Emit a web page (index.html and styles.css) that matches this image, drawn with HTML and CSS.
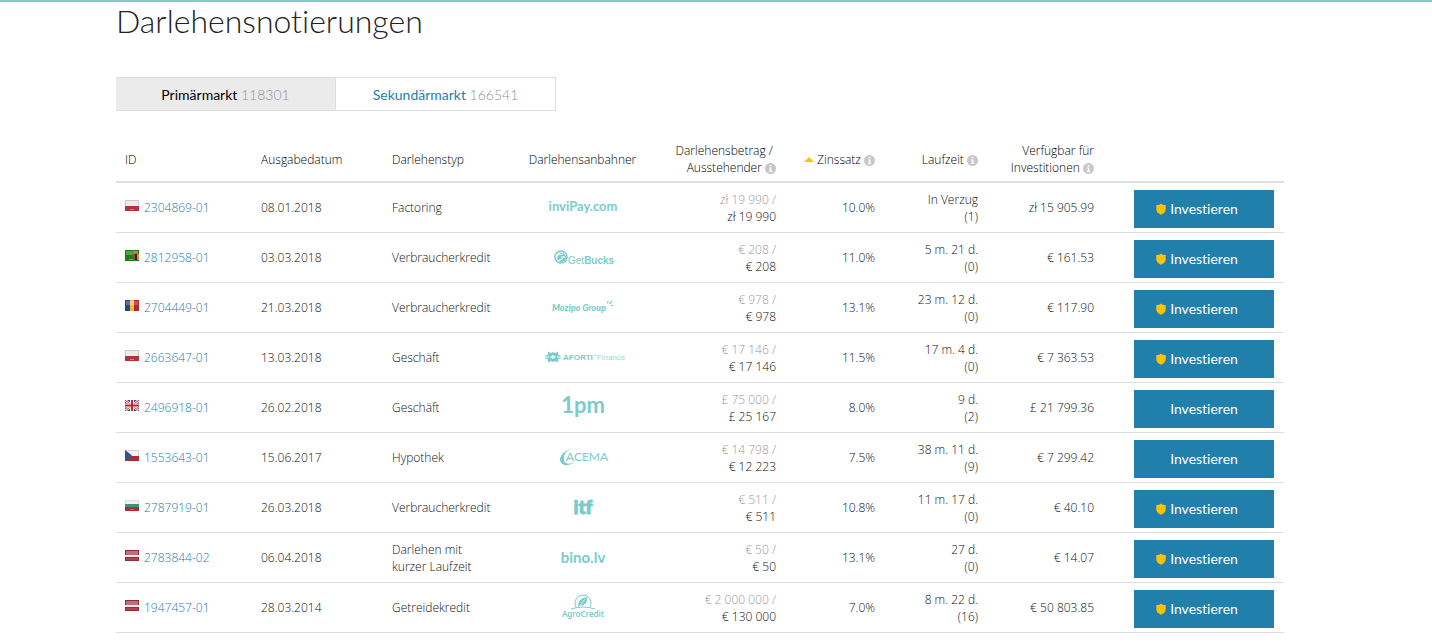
FILE: index.html
```html
<!DOCTYPE html>
<html lang="de">
<head>
  <meta charset="UTF-8" />
  <meta name="viewport" content="width=device-width, initial-scale=1.0" />
  <title>Darlehensnotierungen</title>
  <link rel="stylesheet" href="styles.css">
</head>
<body>
  <svg class="defs" aria-hidden="true">
    <symbol id="info" viewBox="0 0 11 11">
      <circle cx="5.5" cy="5.5" r="5.5" fill="#c9c7c7" />
      <path d="M4 4.5h2.400v3.600h.8v1H3.900v-1h.9V5.500H4zM4.700 2h1.700v1.600H4.700z" fill="#fff" />
    </symbol>
    <symbol id="shield" viewBox="0 0 10 12">
      <path d="M5 0.500C6 1.500 7.500 2 9.700 2v4c0 2.800-2 4.500-4.700 5.700C2.300 10.500.3 8.800.3 6V2C2.500 2 4 1.500 5 .5z" fill="#fdc300" />
    </symbol>
    <symbol id="pl" viewBox="0 0 14 11">
      <path d="M0 0h14v11H0z" fill="#c9c9c9" />
      <path d="M1 1h12v5H1z" fill="#ececec" />
      <path d="M0 6h14v5H0z" fill="#b2343a" />
      <path d="M5 9h4v1H5z" fill="#cf7a7e" />
    </symbol>
    <symbol id="zm" viewBox="0 0 14 11">
      <path d="M0 0h14v11H0z" fill="#1f7a1a" />
      <path d="M1 1h12v4H1z" fill="#54a046" />
      <path d="M8 4h2v6H8z" fill="#c23038" />
      <path d="M10 4h2v6h-2z" fill="#2b2526" />
      <path d="M12 4h2v6h-2z" fill="#e08a1e" />
      <path d="M9 1h4v2H9z" fill="#c58a2a" />
      <path d="M4 9h4v1H4z" fill="#6ab05c" />
    </symbol>
    <symbol id="ro" viewBox="0 0 14 11">
      <path d="M0 0h5v11H0z" fill="#27448f" />
      <path d="M1 1h4v4H1z" fill="#5871ad" />
      <path d="M5 0h4v11H5z" fill="#f3bd32" />
      <path d="M5 1h4v4H5z" fill="#f8d473" />
      <path d="M9 0h5v11H9z" fill="#ad2a31" />
      <path d="M9 1h4v4H9z" fill="#c5575c" />
    </symbol>
    <symbol id="gb" viewBox="0 0 14 11">
      <path d="M0 0h14v11H0z" fill="#2f3f7d" />
      <path d="M0 0l14 11M14 0L0 11" stroke="#f2f2f2" stroke-width="2.600" />
      <path d="M0 0l14 11M14 0L0 11" stroke="#c2343c" stroke-width="1" />
      <path d="M7 0v11M0 5.500h14" stroke="#f5f5f5" stroke-width="4" />
      <path d="M7 0v11M0 5.500h14" stroke="#c2242c" stroke-width="2" />
    </symbol>
    <symbol id="cz" viewBox="0 0 14 11">
      <path d="M0 0h14v11H0z" fill="#d5d5d5" />
      <path d="M1 1h12v5H1z" fill="#f4f4f4" />
      <path d="M0 6h14v5H0z" fill="#b2282f" />
      <path d="M2 8h10v1H2z" fill="#8f3a48" />
      <path d="M0 0l7 5.500L0 11z" fill="#2b5597" />
    </symbol>
    <symbol id="bg" viewBox="0 0 14 11">
      <path d="M0 0h14v4H0z" fill="#dcdcdc" />
      <path d="M1 1h12v3H1z" fill="#f2f2f2" />
      <path d="M0 4h14v3H0z" fill="#3a9479" />
      <path d="M0 7h14v4H0z" fill="#ae2c32" />
      <path d="M5 9h4v1H5z" fill="#c75a60" />
    </symbol>
    <symbol id="lv" viewBox="0 0 14 11">
      <path d="M0 0h14v11H0z" fill="#9a2831" />
      <path d="M1 1h12v4H1z" fill="#b9707a" />
      <path d="M0 5h14v2H0z" fill="#f0e6e7" />
      <path d="M1 8h12v2H1z" fill="#a84750" />
    </symbol>
  </svg>

  <main class="page">
    <h1>Darlehensnotierungen</h1>

    <nav class="tabs">
      <a href="#primary" class="tab active">Primärmarkt <span>118301</span></a>
      <a href="#secondary" class="tab">Sekundärmarkt <span>166541</span></a>
    </nav>

    <table class="loans">
      <colgroup>
        <col class="c-id"><col class="c-date"><col class="c-type"><col class="c-type"><col class="c-id">
        <col class="c-rate"><col class="c-term"><col class="c-avail"><col>
      </colgroup>
      <thead>
        <tr>
          <th>ID</th>
          <th>Ausgabedatum</th>
          <th>Darlehenstyp</th>
          <th class="center">Darlehensanbahner</th>
          <th class="num">Darlehensbetrag /&nbsp;<br>Ausstehender <svg class="info"><use href="#info" /></svg></th>
          <th class="num"><span class="caret"></span> Zinssatz <svg class="info"><use href="#info" /></svg></th>
          <th class="num">Laufzeit <svg class="info"><use href="#info" /></svg></th>
          <th class="num">Verfügbar für<br>Investitionen <svg class="info"><use href="#info" /></svg></th>
          <th></th>
        </tr>
      </thead>
      <tbody>
        <tr>
          <td><a class="loan" href="#2304869-01"><svg class="flag"><use href="#pl" /></svg>2304869-01</a></td>
          <td>08.01.2018</td>
          <td>Factoring</td>
          <td class="center"><svg class="logo" viewBox="0 0 90 36"><text class="round" x="45" y="21" font-size="13" text-anchor="middle">inviPay.com</text></svg></td>
          <td class="num"><span class="total">zł 19 990 /</span><br>zł 19 990</td>
          <td class="num">10.0%</td>
          <td class="num">In Verzug<br>(1)</td>
          <td class="num">zł 15 905.99</td>
          <td class="action"><button class="invest"><svg class="shield"><use href="#shield" /></svg><span>Investieren</span></button></td>
        </tr>
        <tr>
          <td><a class="loan" href="#2812958-01"><svg class="flag"><use href="#zm" /></svg>2812958-01</a></td>
          <td>03.03.2018</td>
          <td>Verbraucherkredit</td>
          <td class="center"><svg class="logo" viewBox="0 0 90 36">
            <circle cx="23" cy="17" r="6" fill="none" stroke="#7accca" stroke-width="1.500" />
            <circle cx="23.500" cy="17.500" r="4.500" />
            <path d="M18.500 17q2-4 6-2.500M20 20.500q5-.5 6-4.500M23 17h4" fill="none" stroke="#fff" />
            <text x="30" y="24" font-size="10">Get<tspan font-weight="700">Bucks</tspan></text>
          </svg></td>
          <td class="num"><span class="total">€ 208 /</span><br>€ 208</td>
          <td class="num">11.0%</td>
          <td class="num">5 m. 21 d.<br>(0)</td>
          <td class="num">€ 161.53</td>
          <td class="action"><button class="invest"><svg class="shield"><use href="#shield" /></svg><span>Investieren</span></button></td>
        </tr>
        <tr>
          <td><a class="loan" href="#2704449-01"><svg class="flag"><use href="#ro" /></svg>2704449-01</a></td>
          <td>21.03.2018</td>
          <td>Verbraucherkredit</td>
          <td class="center"><svg class="logo" viewBox="0 0 90 36">
            <text class="slanted" x="14" y="21" font-size="9">Mozipo Group</text>
            <path d="M69.500 13.500l.5-2.500M71.500 14l2.500-3M72.500 16l3-1" fill="none" stroke="#7accca" stroke-width="1.200" />
          </svg></td>
          <td class="num"><span class="total">€ 978 /</span><br>€ 978</td>
          <td class="num">13.1%</td>
          <td class="num">23 m. 12 d.<br>(0)</td>
          <td class="num">€ 117.90</td>
          <td class="action"><button class="invest"><svg class="shield"><use href="#shield" /></svg><span>Investieren</span></button></td>
        </tr>
        <tr>
          <td><a class="loan" href="#2663647-01"><svg class="flag"><use href="#pl" /></svg>2663647-01</a></td>
          <td>13.03.2018</td>
          <td>Geschäft</td>
          <td class="center"><svg class="logo" viewBox="0 0 90 36">
            <path d="M10 11.500l3 1.500 2-1 2 1 3-1.500v3l3 1.500v2l-3 1.500v3L17 21l-2 1-2-1-3 1.500v-3L7 18v-2l3-1.500z" />
            <path d="M12 17l3-2 3 2-3 2zM7 16.500h4v1H7zM19 16.500h4v1h-4z" fill="#fff" />
            <text x="25" y="20" font-size="8"><tspan font-weight="700">AFORTI</tspan><tspan font-size="4" dy="-3">™</tspan><tspan dy="3" opacity=".75">Finance</tspan></text>
          </svg></td>
          <td class="num"><span class="total">€ 17 146 /</span><br>€ 17 146</td>
          <td class="num">11.5%</td>
          <td class="num">17 m. 4 d.<br>(0)</td>
          <td class="num">€ 7 363.53</td>
          <td class="action"><button class="invest"><svg class="shield"><use href="#shield" /></svg><span>Investieren</span></button></td>
        </tr>
        <tr>
          <td><a class="loan" href="#2496918-01"><svg class="flag"><use href="#gb" /></svg>2496918-01</a></td>
          <td>26.02.2018</td>
          <td>Geschäft</td>
          <td class="center"><svg class="logo" viewBox="0 0 90 36"><text class="round" x="45" y="23" font-size="22" text-anchor="middle">1pm</text></svg></td>
          <td class="num"><span class="total">£ 75 000 /</span><br>£ 25 167</td>
          <td class="num">8.0%</td>
          <td class="num">9 d.<br>(2)</td>
          <td class="num">£ 21 799.36</td>
          <td class="action"><button class="invest"><span>Investieren</span></button></td>
        </tr>
        <tr>
          <td><a class="loan" href="#1553643-01"><svg class="flag"><use href="#cz" /></svg>1553643-01</a></td>
          <td>15.06.2017</td>
          <td>Hypothek</td>
          <td class="center"><svg class="logo" viewBox="0 0 90 36">
            <path d="M38 12q-4-5-10-1t-6 9q1 6 8 5 5-1 7-3-6 3-9 1t-2-6q1-5 5-7t7 2z" />
            <text class="round regular" x="28" y="21" font-size="12">ACEMA</text>
          </svg></td>
          <td class="num"><span class="total">€ 14 798 /</span><br>€ 12 223</td>
          <td class="num">7.5%</td>
          <td class="num">38 m. 11 d.<br>(9)</td>
          <td class="num">€ 7 299.42</td>
          <td class="action"><button class="invest"><span>Investieren</span></button></td>
        </tr>
        <tr>
          <td><a class="loan" href="#2787919-01"><svg class="flag"><use href="#bg" /></svg>2787919-01</a></td>
          <td>26.03.2018</td>
          <td>Verbraucherkredit</td>
          <td class="center"><svg class="logo" viewBox="0 0 90 36"><text class="round heavy" x="45" y="24" font-size="19" text-anchor="middle">itf</text></svg></td>
          <td class="num"><span class="total">€ 511 /</span><br>€ 511</td>
          <td class="num">10.8%</td>
          <td class="num">11 m. 17 d.<br>(0)</td>
          <td class="num">€ 40.10</td>
          <td class="action"><button class="invest"><svg class="shield"><use href="#shield" /></svg><span>Investieren</span></button></td>
        </tr>
        <tr>
          <td><a class="loan" href="#2783844-02"><svg class="flag"><use href="#lv" /></svg>2783844-02</a></td>
          <td>06.04.2018</td>
          <td>Darlehen mit<br>kurzer Laufzeit</td>
          <td class="center"><svg class="logo" viewBox="0 0 90 36"><text class="round" x="45" y="23" font-size="15" text-anchor="middle">bino.lv</text></svg></td>
          <td class="num"><span class="total">€ 50 /</span><br>€ 50</td>
          <td class="num">13.1%</td>
          <td class="num">27 d.<br>(0)</td>
          <td class="num">€ 14.07</td>
          <td class="action"><button class="invest"><svg class="shield"><use href="#shield" /></svg><span>Investieren</span></button></td>
        </tr>
        <tr>
          <td><a class="loan" href="#1947457-01"><svg class="flag"><use href="#lv" /></svg>1947457-01</a></td>
          <td>28.03.2014</td>
          <td>Getreidekredit</td>
          <td class="center"><svg class="logo" viewBox="0 0 90 36">
            <path d="M38 17a8 8 0 1 1 14 0M33 19q12-4 24 0" fill="none" stroke="#7accca" />
            <path d="M40 16q0-8 9-9 1 8-7 9l-1 1z" />
            <path d="M41 17l6-8" stroke="#fff" stroke-width=".6" />
            <text x="45" y="27" font-size="8" text-anchor="middle" class="humanist">AgroCredit</text>
          </svg></td>
          <td class="num"><span class="total">€ 2 000 000 /</span><br>€ 130 000</td>
          <td class="num">7.0%</td>
          <td class="num">8 m. 22 d.<br>(16)</td>
          <td class="num">€ 50 803.85</td>
          <td class="action"><button class="invest"><svg class="shield"><use href="#shield" /></svg><span>Investieren</span></button></td>
        </tr>
      </tbody>
    </table>
  </main>
</body>
</html>
```
FILE: styles.css
```css
body { margin: 0; border-top: 2px solid #7accc8; background: #fff; color: #333; font: 13px/17px Lato, sans-serif; font-variant-ligatures: none; }
a { color: #2180ab; text-decoration: none; }
.defs { display: none; }
.page { max-width: 1168px; margin: auto; padding: 0 32px 0 0; }
h1 { margin: 0; font-size: 32px; line-height: 37px; font-weight: 300; color: #222; }

.tabs { display: flex; max-width: 440px; margin: 38px 0 26px; }
.tab { flex: 1; padding: 9px 0 7px; border: 1px solid #dedede; border-left: 0; text-align: center; font-size: 14px; line-height: 16px; }
.tab span { color: #998f9e; font-weight: 300; }
.tab.active { background: #ebebeb; color: #000; }

.loans { width: 100%; table-layout: fixed; border-collapse: collapse; font-family: "Open Sans", sans-serif; font-size: 12px; font-weight: 300; }
.c-id { width: 136px; }
.c-date { width: 131px; }
.c-type { width: 133px; }
.c-rate { width: 99px; }
.c-term { width: 103px; }
.c-avail { width: 116px; }
th, td { padding: 0 9px; text-align: left; white-space: nowrap; }
th { height: 44px; border-bottom: 2px solid #dedede; color: #000; font-weight: 300; }
td { border-bottom: 1px solid #dedede; color: #111; }
.center { text-align: center; }
.num { text-align: right; }
.total { color: #999; }

.info { width: 11px; height: 11px; vertical-align: -2px; }
.caret { display: inline-block; border: 5px solid transparent; border-top: 0; border-bottom-color: #fdc300; vertical-align: 2px; }
.loan { display: flex; align-items: center; gap: 5px; }
.flag { width: 14px; height: 11px; margin-bottom: 4px; }
.logo { display: block; width: 90px; height: 36px; margin: auto; overflow: visible; fill: #7accca; font-family: "Liberation Sans", sans-serif; font-weight: 400; }
.round { font-family: Lato, sans-serif; font-weight: 700; }
.regular { font-weight: 400; }
.heavy { font-weight: 900; stroke: #7accca; stroke-width: 1px; }
.slanted { font-family: Lato, sans-serif; font-weight: 900; font-style: italic; }
.humanist { font-family: "Noto Sans", sans-serif; font-weight: 600; }

td.action { padding: 7px 10px 4px; }
.invest { display: grid; grid-template-columns: 1fr auto 1fr; align-items: center; gap: 4px; width: 140px; height: 38px; margin-left: auto; padding: 0; border: 0; background: #2180ab; color: #fff; font: 14px/20px Lato, sans-serif; font-variant-ligatures: none; cursor: pointer; }
.invest span { grid-column: 2; }
.shield { justify-self: end; width: 10px; height: 12px; }
```
